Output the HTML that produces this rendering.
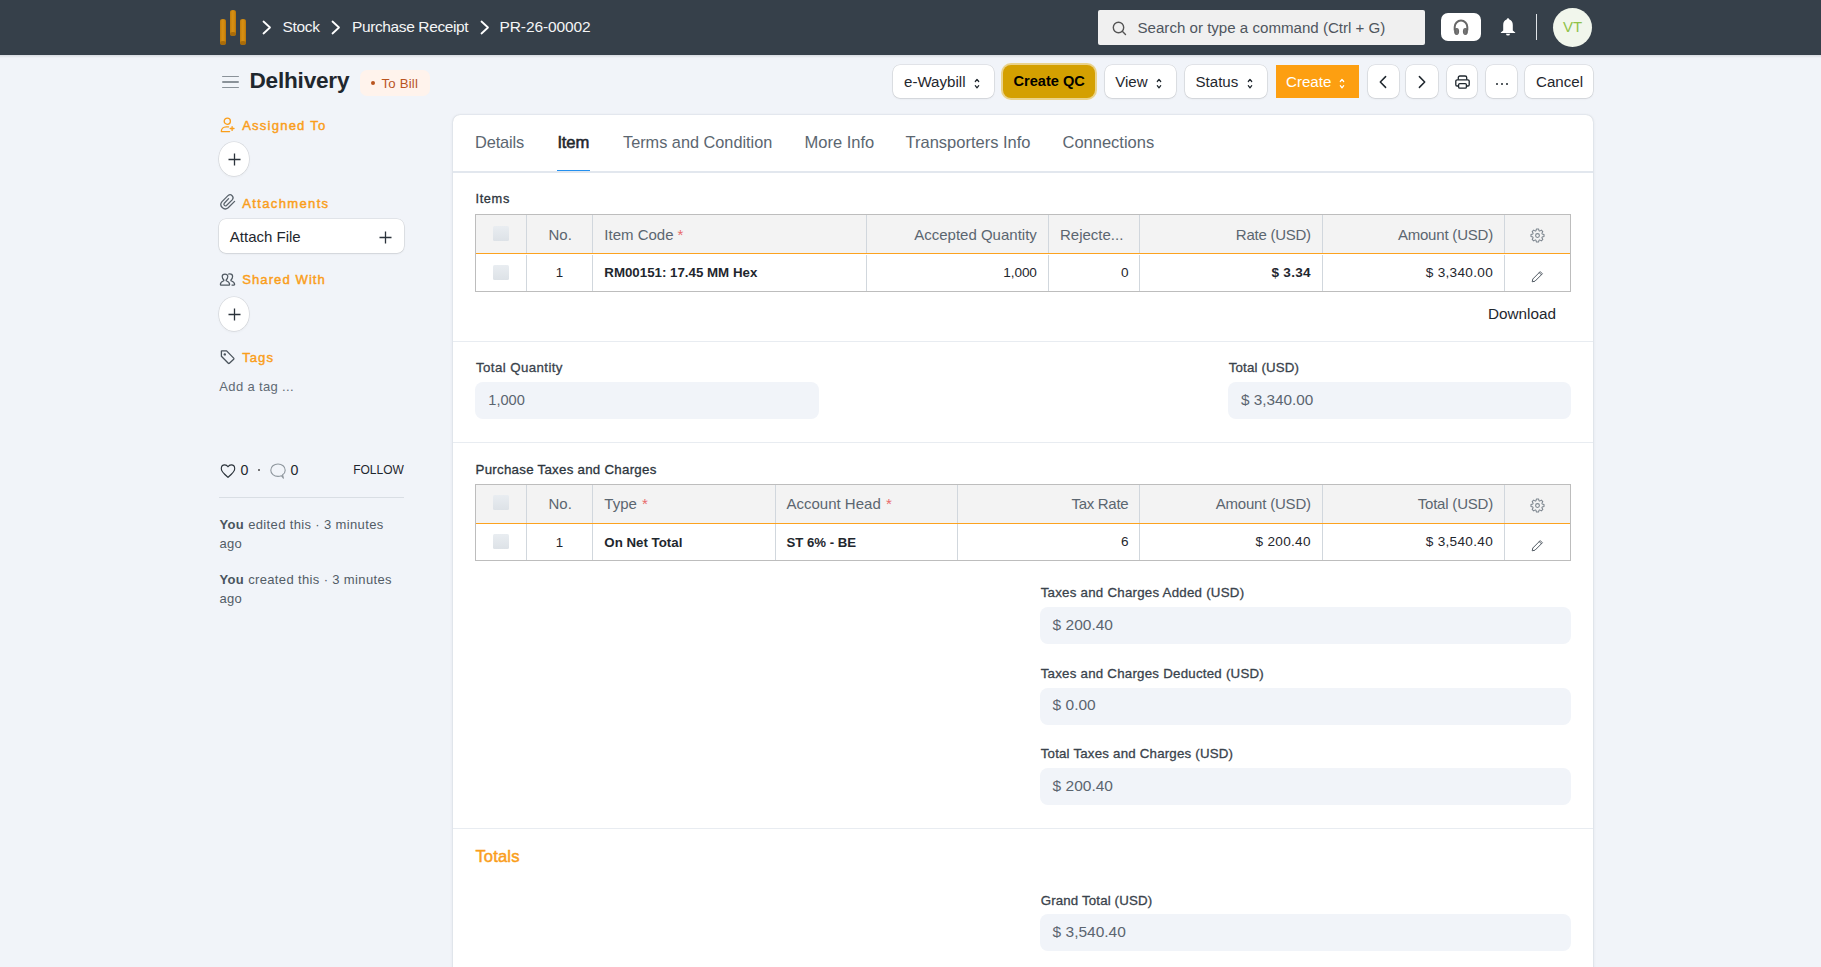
<!DOCTYPE html>
<html><head><meta charset="utf-8"><title>PR-26-00002</title>
<style>
html,body{margin:0;padding:0;}
body{width:1821px;height:967px;overflow:hidden;position:relative;background:#f1f4f9;font-family:"Liberation Sans",sans-serif;}
.r{position:absolute;display:block;}
.t{position:absolute;white-space:nowrap;}
</style></head><body>
<div class="r" style="left:0px;top:0px;width:1821px;height:55px;background:#36404a;"></div>
<div class="r" style="left:220.1px;top:19px;width:6.400000000000006px;height:26.200000000000003px;background:linear-gradient(90deg,#c07d0c 0%,#d78f12 40%,#d08a10 70%,#b87409 100%);border-radius:3.200000000000003px/2.400000000000002px;"></div>
<div class="r" style="left:220.4px;top:40.72px;width:5.799999999999983px;height:4.280000000000001px;background:#9c6208;border-radius:50%;opacity:.75;"></div>
<div class="r" style="left:230.1px;top:10px;width:6.400000000000006px;height:26.200000000000003px;background:linear-gradient(90deg,#c07d0c 0%,#d78f12 40%,#d08a10 70%,#b87409 100%);border-radius:3.200000000000003px/2.400000000000002px;"></div>
<div class="r" style="left:230.4px;top:31.72px;width:5.799999999999983px;height:4.280000000000001px;background:#9c6208;border-radius:50%;opacity:.75;"></div>
<div class="r" style="left:240.1px;top:19px;width:6.400000000000006px;height:26.200000000000003px;background:linear-gradient(90deg,#c07d0c 0%,#d78f12 40%,#d08a10 70%,#b87409 100%);border-radius:3.200000000000003px/2.400000000000002px;"></div>
<div class="r" style="left:240.4px;top:40.72px;width:5.799999999999983px;height:4.280000000000001px;background:#9c6208;border-radius:50%;opacity:.75;"></div>
<svg class="r" style="left:262px;top:20px;" width="10" height="15" viewBox="0 0 10 15"><polyline points="1.5,1.5 8,7.5 1.5,13.5" fill="none" stroke="#fff" stroke-width="1.8" stroke-linecap="round" stroke-linejoin="round"/></svg>
<svg class="r" style="left:331px;top:20px;" width="10" height="15" viewBox="0 0 10 15"><polyline points="1.5,1.5 8,7.5 1.5,13.5" fill="none" stroke="#fff" stroke-width="1.8" stroke-linecap="round" stroke-linejoin="round"/></svg>
<svg class="r" style="left:480px;top:20px;" width="10" height="15" viewBox="0 0 10 15"><polyline points="1.5,1.5 8,7.5 1.5,13.5" fill="none" stroke="#fff" stroke-width="1.8" stroke-linecap="round" stroke-linejoin="round"/></svg>
<div class="t " style="top:19.08px;font-size:15.5px;line-height:15.5px;font-weight:400;color:#f4f5f6;letter-spacing:-0.3px;left:282.50px;">Stock</div>
<div class="t " style="top:19.08px;font-size:15.5px;line-height:15.5px;font-weight:400;color:#f4f5f6;letter-spacing:-0.38px;left:352.00px;">Purchase Receipt</div>
<div class="t " style="top:19.08px;font-size:15.5px;line-height:15.5px;font-weight:400;color:#f4f5f6;letter-spacing:-0.1px;left:499.50px;">PR-26-00002</div>
<div class="r" style="left:1098px;top:10px;width:327px;height:35px;background:#f0f0f0;border-radius:2px;"></div>
<svg class="r" style="left:1112px;top:21px;" width="15" height="15" viewBox="0 0 15 15"><circle cx="6.5" cy="6.5" r="5.2" fill="none" stroke="#555" stroke-width="1.4"/><line x1="10.3" y1="10.3" x2="13.5" y2="13.5" stroke="#555" stroke-width="1.4" stroke-linecap="round"/></svg>
<div class="t " style="top:19.82px;font-size:15.1px;line-height:15.1px;font-weight:400;color:#4f565e;left:1137.50px;">Search or type a command (Ctrl + G)</div>
<div class="r" style="left:1441px;top:13px;width:40px;height:28px;background:#fff;border-radius:7px;"></div>
<svg class="r" style="left:1453px;top:19px;" width="16" height="17" viewBox="0 0 16 17"><path d="M1.7,11.5 V7.9 A6.3,6.3 0 0 1 14.3,7.9 V11.5" fill="none" stroke="#686868" stroke-width="2"/><ellipse cx="3.6" cy="12.5" rx="2.5" ry="3.4" fill="#686868"/><ellipse cx="12.4" cy="12.5" rx="2.5" ry="3.4" fill="#686868"/><rect x="3.2" y="9.6" width="1.6" height="5.8" fill="#888" opacity=".5"/><rect x="11.2" y="9.6" width="1.6" height="5.8" fill="#888" opacity=".5"/></svg>
<svg class="r" style="left:1500px;top:18px;" width="16" height="18" viewBox="0 0 16 18"><path d="M8,0.3 C8.8,0.3 9.2,1 9.3,1.6 C11.6,2.3 12.8,4.4 12.8,7 V12.4 L15.2,14.6 V15 H0.8 V14.6 L3.2,12.4 V7 C3.2,4.4 4.4,2.3 6.7,1.6 C6.8,1 7.2,0.3 8,0.3 Z" fill="#fff"/><path d="M6,15.7 H10 A2,1.9 0 0 1 6,15.7 Z" fill="#fff"/></svg>
<div class="r" style="left:1536px;top:14px;width:1.400000000000091px;height:26px;background:#dfe3e7;"></div>
<div class="r" style="left:1553px;top:8px;width:39px;height:39px;background:#f1f6ec;border-radius:50%;"></div>
<div class="t " style="top:19.20px;font-size:15px;line-height:15px;font-weight:400;color:#8fc249;left:1372.50px;width:400px;text-align:center;">VT</div>
<div class="r" style="left:0px;top:55px;width:1821px;height:912px;background:#f1f4f9;"></div>
<div class="r" style="left:0px;top:55px;width:1821px;height:3px;background:linear-gradient(180deg,rgba(40,50,60,.13),rgba(40,50,60,0));"></div>
<div class="r" style="left:221.5px;top:75.5px;width:17.0px;height:1.7999999999999972px;background:#8a9299;border-radius:1px;"></div>
<div class="r" style="left:221.5px;top:81px;width:17.0px;height:1.7999999999999972px;background:#8a9299;border-radius:1px;"></div>
<div class="r" style="left:221.5px;top:86.5px;width:17.0px;height:1.7999999999999972px;background:#8a9299;border-radius:1px;"></div>
<div class="t " style="top:69.87px;font-size:22.6px;line-height:22.6px;font-weight:700;color:#1f272e;letter-spacing:-0.22px;left:249.50px;">Delhivery</div>
<div class="r" style="left:360px;top:70px;width:70px;height:26px;background:#fff3ec;border-radius:7px;"></div>
<div class="r" style="left:371px;top:81px;width:4px;height:4px;background:#b9541f;border-radius:50%;"></div>
<div class="t " style="top:76.63px;font-size:13.2px;line-height:13.2px;font-weight:400;color:#b9541f;letter-spacing:0.2px;left:381.50px;">To Bill</div>
<div class="r" style="left:893px;top:64.5px;width:101px;height:33.8px;background:#fff;border-radius:7px;box-shadow:0 0 0 0.6px rgba(0,0,0,.13),0 1px 2px rgba(0,0,0,.08);"></div>
<div class="t " style="top:74.02px;font-size:15.1px;line-height:15.1px;font-weight:400;color:#1f272e;left:904.00px;">e-Waybill</div>
<svg class="r" style="left:973.5px;top:78.2px;" width="6" height="10.4" viewBox="0 0 6 10.4"><polyline points="1.3,3.5 3,1.4 4.7,3.5" fill="none" stroke="#1f272e" stroke-width="1.25" stroke-linecap="round" stroke-linejoin="round"/><polyline points="1.3,7.7 3,9.8 4.7,7.7" fill="none" stroke="#1f272e" stroke-width="1.25" stroke-linecap="round" stroke-linejoin="round"/></svg>
<div class="r" style="left:1002.6px;top:65.2px;width:92.80000000000007px;height:32.5px;background:#d4a001;border-radius:8px;box-shadow:0 0 0 2px #ead38c;"></div>
<div class="t " style="top:74.44px;font-size:14.6px;line-height:14.6px;font-weight:700;color:#000;left:1013.50px;">Create QC</div>
<div class="r" style="left:1104.7px;top:64.5px;width:71.70000000000005px;height:33.8px;background:#fff;border-radius:7px;box-shadow:0 0 0 0.6px rgba(0,0,0,.13),0 1px 2px rgba(0,0,0,.08);"></div>
<div class="t " style="top:74.02px;font-size:15.1px;line-height:15.1px;font-weight:400;color:#1f272e;left:1115.20px;">View</div>
<svg class="r" style="left:1156px;top:78.2px;" width="6" height="10.4" viewBox="0 0 6 10.4"><polyline points="1.3,3.5 3,1.4 4.7,3.5" fill="none" stroke="#1f272e" stroke-width="1.25" stroke-linecap="round" stroke-linejoin="round"/><polyline points="1.3,7.7 3,9.8 4.7,7.7" fill="none" stroke="#1f272e" stroke-width="1.25" stroke-linecap="round" stroke-linejoin="round"/></svg>
<div class="r" style="left:1184.8px;top:64.5px;width:82.20000000000005px;height:33.8px;background:#fff;border-radius:7px;box-shadow:0 0 0 0.6px rgba(0,0,0,.13),0 1px 2px rgba(0,0,0,.08);"></div>
<div class="t " style="top:74.02px;font-size:15.1px;line-height:15.1px;font-weight:400;color:#1f272e;left:1195.50px;">Status</div>
<svg class="r" style="left:1247px;top:78.2px;" width="6" height="10.4" viewBox="0 0 6 10.4"><polyline points="1.3,3.5 3,1.4 4.7,3.5" fill="none" stroke="#1f272e" stroke-width="1.25" stroke-linecap="round" stroke-linejoin="round"/><polyline points="1.3,7.7 3,9.8 4.7,7.7" fill="none" stroke="#1f272e" stroke-width="1.25" stroke-linecap="round" stroke-linejoin="round"/></svg>
<div class="r" style="left:1276px;top:65.2px;width:83px;height:32.599999999999994px;background:#fd9f11;"></div>
<div class="t " style="top:74.02px;font-size:15.1px;line-height:15.1px;font-weight:400;color:#fff;left:1286.00px;">Create</div>
<svg class="r" style="left:1338.5px;top:78.2px;" width="6" height="10.4" viewBox="0 0 6 10.4"><polyline points="1.3,3.5 3,1.4 4.7,3.5" fill="none" stroke="#fff" stroke-width="1.25" stroke-linecap="round" stroke-linejoin="round"/><polyline points="1.3,7.7 3,9.8 4.7,7.7" fill="none" stroke="#fff" stroke-width="1.25" stroke-linecap="round" stroke-linejoin="round"/></svg>
<div class="r" style="left:1367.5px;top:64.5px;width:31.5px;height:33.8px;background:#fff;border-radius:7px;box-shadow:0 0 0 0.6px rgba(0,0,0,.13),0 1px 2px rgba(0,0,0,.08);"></div>
<svg class="r" style="left:1379px;top:75px;" width="8" height="14" viewBox="0 0 8 14"><polyline points="6.6,1.6 1.3,7 6.6,12.4" fill="none" stroke="#1f272e" stroke-width="1.5" stroke-linecap="round" stroke-linejoin="round"/></svg>
<div class="r" style="left:1406.4px;top:64.5px;width:31.59999999999991px;height:33.8px;background:#fff;border-radius:7px;box-shadow:0 0 0 0.6px rgba(0,0,0,.13),0 1px 2px rgba(0,0,0,.08);"></div>
<svg class="r" style="left:1418px;top:75px;" width="8" height="14" viewBox="0 0 8 14"><polyline points="1.4,1.6 6.7,7 1.4,12.4" fill="none" stroke="#1f272e" stroke-width="1.5" stroke-linecap="round" stroke-linejoin="round"/></svg>
<div class="r" style="left:1446.6px;top:64.5px;width:30.40000000000009px;height:33.8px;background:#fff;border-radius:7px;box-shadow:0 0 0 0.6px rgba(0,0,0,.13),0 1px 2px rgba(0,0,0,.08);"></div>
<svg class="r" style="left:1454.5px;top:74.5px;" width="15" height="14" viewBox="0 0 15 14"><path d="M3.3,4.8 V2.6 A1.6,1.6 0 0 1 4.9,1 H10.1 A1.6,1.6 0 0 1 11.7,2.6 V4.8" fill="none" stroke="#1f272e" stroke-width="1.3"/><path d="M3.3,11 H2.1 A1.3,1.3 0 0 1 0.8,9.7 V6.1 A1.3,1.3 0 0 1 2.1,4.8 H12.9 A1.3,1.3 0 0 1 14.2,6.1 V9.7 A1.3,1.3 0 0 1 12.9,11 H11.7" fill="none" stroke="#1f272e" stroke-width="1.3"/><rect x="3.6" y="8.6" width="7.8" height="4.6" rx="1.2" fill="none" stroke="#1f272e" stroke-width="1.3"/></svg>
<div class="r" style="left:1485.5px;top:64.5px;width:31.5px;height:33.8px;background:#fff;border-radius:7px;box-shadow:0 0 0 0.6px rgba(0,0,0,.13),0 1px 2px rgba(0,0,0,.08);"></div>
<div class="r" style="left:1496px;top:83px;width:2.400000000000091px;height:2.4000000000000057px;background:#1f272e;border-radius:50%;"></div>
<div class="r" style="left:1501px;top:83px;width:2.400000000000091px;height:2.4000000000000057px;background:#1f272e;border-radius:50%;"></div>
<div class="r" style="left:1506px;top:83px;width:2.400000000000091px;height:2.4000000000000057px;background:#1f272e;border-radius:50%;"></div>
<div class="r" style="left:1524.5px;top:64.5px;width:68.5px;height:33.8px;background:#fff;border-radius:7px;box-shadow:0 0 0 0.6px rgba(0,0,0,.13),0 1px 2px rgba(0,0,0,.08);"></div>
<div class="t " style="top:74.02px;font-size:15.1px;line-height:15.1px;font-weight:400;color:#1f272e;left:1536.00px;">Cancel</div>
<svg class="r" style="left:220px;top:117px;" width="16" height="16" viewBox="0 0 16 16"><circle cx="7.3" cy="4.2" r="3.1" fill="none" stroke="#fa9e1b" stroke-width="1.3"/><path d="M8.5,9.9 H6.2 C3.3,9.9 1.3,12 1.3,14.6 H9.6" fill="none" stroke="#fa9e1b" stroke-width="1.3" stroke-linecap="round" stroke-linejoin="round"/><path d="M12.1,9.6 V13.4 M10.2,11.5 H14" stroke="#fa9e1b" stroke-width="1.3" stroke-linecap="round"/></svg>
<div class="t " style="top:118.71px;font-size:13.1px;line-height:13.1px;font-weight:400;color:#fa9e1b;letter-spacing:1.19px;left:242.20px;-webkit-text-stroke:0.45px #fa9e1b;">Assigned To</div>
<div class="r" style="left:218.7px;top:142.2px;width:30.700000000000017px;height:34.0px;background:#fff;border-radius:50%;box-shadow:0 0 0 0.6px rgba(0,0,0,.12),0 1px 3px rgba(0,0,0,.06);"></div>
<svg class="r" style="left:227.5px;top:153.2px;" width="13" height="13" viewBox="0 0 13 13"><path d="M6.5,0.5 V12.5 M0.5,6.5 H12.5" stroke="#2b333b" stroke-width="1.3"/></svg>
<svg class="r" style="left:215px;top:190px;" width="25" height="22" viewBox="0 0 25 22"><path d="M19.6,11.4 L13.2,17.8 A4.4,4.4 0 0 1 7,11.6 L13.2,5.4 A3,3 0 0 1 17.4,9.6 L11.5,15.5 A1.6,1.6 0 0 1 9.3,13.2 L13.6,8.6" fill="none" stroke="#5a636c" stroke-width="1.3" stroke-linecap="round"/></svg>
<div class="t " style="top:196.61px;font-size:13.1px;line-height:13.1px;font-weight:400;color:#fa9e1b;letter-spacing:1.32px;left:242.20px;-webkit-text-stroke:0.45px #fa9e1b;">Attachments</div>
<div class="r" style="left:219px;top:219.3px;width:185px;height:34.0px;background:#fff;border-radius:7px;box-shadow:0 0 0 0.6px rgba(0,0,0,.12),0 1px 2px rgba(0,0,0,.08);"></div>
<div class="t " style="top:229.30px;font-size:15px;line-height:15px;font-weight:400;color:#1f272e;left:229.80px;">Attach File</div>
<svg class="r" style="left:378.5px;top:230.5px;" width="13" height="13" viewBox="0 0 13 13"><path d="M6.5,0.5 V12.5 M0.5,6.5 H12.5" stroke="#2b333b" stroke-width="1.3"/></svg>
<svg class="r" style="left:215px;top:268px;" width="25" height="24" viewBox="0 0 25 24"><path d="M6,17.1 H14 A0.6,0.6 0 0 0 14.6,16.5 C14.6,14.6 13.4,13.7 11.8,13 L11.1,12.6 V11.9 C12.1,11.1 12.8,9.9 12.8,8.6 C12.8,6.9 11.6,6 10,6 C8.4,6 7.2,6.9 7.2,8.6 C7.2,9.9 7.9,11.1 8.9,11.9 V12.6 L8.2,13 C6.6,13.7 5.4,14.6 5.4,16.5 A0.6,0.6 0 0 0 6,17.1 Z" fill="none" stroke="#505962" stroke-width="1.25" stroke-linejoin="round"/><path d="M13.6,6 C14,5.95 14.4,5.9 14.8,5.9 C16.4,5.9 17.6,6.8 17.6,8.6 C17.6,9.9 16.9,11.1 15.9,11.9 V12.6 L16.6,13 C18.2,13.7 19.6,14.6 19.6,16.5 A0.6,0.6 0 0 1 19,17.1 H17" fill="none" stroke="#505962" stroke-width="1.25" stroke-linejoin="round" stroke-linecap="round"/></svg>
<div class="t " style="top:273.21px;font-size:13.1px;line-height:13.1px;font-weight:400;color:#fa9e1b;letter-spacing:1.06px;left:242.20px;-webkit-text-stroke:0.45px #fa9e1b;">Shared With</div>
<div class="r" style="left:218.7px;top:297.4px;width:30.700000000000017px;height:34.0px;background:#fff;border-radius:50%;box-shadow:0 0 0 0.6px rgba(0,0,0,.12),0 1px 3px rgba(0,0,0,.06);"></div>
<svg class="r" style="left:227.5px;top:308.4px;" width="13" height="13" viewBox="0 0 13 13"><path d="M6.5,0.5 V12.5 M0.5,6.5 H12.5" stroke="#2b333b" stroke-width="1.3"/></svg>
<svg class="r" style="left:220px;top:349.5px;" width="16" height="16" viewBox="0 0 16 16"><path d="M1.4,1.2 A0.3,0.3 0 0 1 1.7,0.9 H6.6 L13.7,8.1 A0.8,0.8 0 0 1 13.7,9.2 L9.4,13.2 A0.8,0.8 0 0 1 8.3,13.2 L1.4,6.2 Z" fill="none" stroke="#4a535c" stroke-width="1.3" stroke-linejoin="round"/><circle cx="4.8" cy="4.4" r="1.2" fill="#4a535c"/></svg>
<div class="t " style="top:351.01px;font-size:13.1px;line-height:13.1px;font-weight:400;color:#fa9e1b;letter-spacing:1.033px;left:242.20px;-webkit-text-stroke:0.45px #fa9e1b;">Tags</div>
<div class="t " style="top:379.70px;font-size:13px;line-height:13px;font-weight:400;color:#606a74;letter-spacing:0.35px;left:219.30px;">Add a tag ...</div>
<svg class="r" style="left:219.5px;top:463.5px;" width="16" height="15" viewBox="0 0 16 15"><path d="M8,13.3 C5.5,11.1 1.3,7.9 1.3,4.7 C1.3,2.5 2.9,0.9 4.8,0.9 C6.2,0.9 7.3,1.7 8,2.8 C8.7,1.7 9.8,0.9 11.2,0.9 C13.1,0.9 14.7,2.5 14.7,4.7 C14.7,7.9 10.5,11.1 8,13.3 Z" fill="none" stroke="#2b333b" stroke-width="1.15" stroke-linejoin="round"/></svg>
<div class="t " style="top:462.68px;font-size:14.2px;line-height:14.2px;font-weight:400;color:#1f272e;left:240.50px;">0</div>
<div class="r" style="left:257.6px;top:468.9px;width:2.1999999999999886px;height:2.2000000000000455px;background:#4a4a4a;border-radius:50%;"></div>
<svg class="r" style="left:269.5px;top:462.5px;" width="17" height="17" viewBox="0 0 17 17"><path d="M12.6,11.8 C14.3,10.6 15.2,9 15.2,7.2 C15.2,3.7 12,1 8,1 C4,1 0.8,3.7 0.8,7.2 C0.8,10.7 4,13.4 8,13.4 C9.3,13.4 10.4,13.1 11.4,12.7 L13.4,15.2 Z" fill="none" stroke="#8f979e" stroke-width="1.1" stroke-linejoin="round"/></svg>
<div class="t " style="top:462.68px;font-size:14.2px;line-height:14.2px;font-weight:400;color:#1f272e;left:290.50px;">0</div>
<div class="t " style="top:463.74px;font-size:12px;line-height:12px;font-weight:400;color:#1f272e;right:1417.20px;">FOLLOW</div>
<div class="r" style="left:219px;top:497px;width:185px;height:1px;background:#d9dee4;"></div>
<div class="t " style="top:517.90px;font-size:13px;line-height:13px;font-weight:400;color:#525c66;letter-spacing:0.36px;left:219.50px;"><b style="color:#4a545e">You</b> edited this · 3 minutes</div>
<div class="t " style="top:536.80px;font-size:13px;line-height:13px;font-weight:400;color:#525c66;letter-spacing:0.3px;left:219.50px;">ago</div>
<div class="t " style="top:572.70px;font-size:13px;line-height:13px;font-weight:400;color:#525c66;letter-spacing:0.36px;left:219.50px;"><b style="color:#4a545e">You</b> created this · 3 minutes</div>
<div class="t " style="top:592.20px;font-size:13px;line-height:13px;font-weight:400;color:#525c66;letter-spacing:0.3px;left:219.50px;">ago</div>
<div class="r" style="left:452.7px;top:114.5px;width:1140.3px;height:885.5px;background:#fff;border-radius:7px;box-shadow:0 0 1.5px rgba(25,39,52,.22),0 1px 4px rgba(25,39,52,.07);"></div>
<div class="t " style="top:134.12px;font-size:16.4px;line-height:16.4px;font-weight:400;color:#5b6670;letter-spacing:-0.15px;left:475.00px;">Details</div>
<div class="t " style="top:135.05px;font-size:16.6px;line-height:16.6px;font-weight:400;color:#1f272e;letter-spacing:-0.133px;left:557.40px;-webkit-text-stroke:0.55px #1f272e;">Item</div>
<div class="t " style="top:134.20px;font-size:16.3px;line-height:16.3px;font-weight:400;color:#5b6670;left:623.00px;">Terms and Condition</div>
<div class="t " style="top:134.03px;font-size:16.5px;line-height:16.5px;font-weight:400;color:#5b6670;left:804.50px;">More Info</div>
<div class="t " style="top:134.03px;font-size:16.5px;line-height:16.5px;font-weight:400;color:#5b6670;left:905.50px;">Transporters Info</div>
<div class="t " style="top:134.03px;font-size:16.5px;line-height:16.5px;font-weight:400;color:#5b6670;left:1062.50px;">Connections</div>
<div class="r" style="left:453px;top:171.3px;width:1140px;height:1.6999999999999886px;background:#e2e7ee;"></div>
<div class="r" style="left:557px;top:169.7px;width:33px;height:1.700000000000017px;background:#2490ef;"></div>
<div class="t " style="top:193.16px;font-size:12.8px;line-height:12.8px;font-weight:400;color:#2d353d;letter-spacing:0.625px;left:475.50px;-webkit-text-stroke:0.3px #2d353d;">Items</div>
<div class="r" style="left:475.3px;top:214.2px;width:1095.7px;height:77.40000000000003px;background:#fff;box-shadow:inset 0 0 0 1px #bdbdbd;"></div>
<div class="r" style="left:476.3px;top:215.2px;width:1093.7px;height:38.0px;background:#f3f3f3;"></div>
<div class="r" style="left:476.3px;top:253.2px;width:1093.7px;height:1.3000000000000114px;background:#fca21f;"></div>
<div class="r" style="left:526.1px;top:215.2px;width:1.0px;height:38.0px;background:#d1d7dd;"></div>
<div class="r" style="left:526.1px;top:254.5px;width:1.0px;height:36.10000000000002px;background:#d1d7dd;"></div>
<div class="r" style="left:591.8px;top:215.2px;width:1.0px;height:38.0px;background:#d1d7dd;"></div>
<div class="r" style="left:591.8px;top:254.5px;width:1.0px;height:36.10000000000002px;background:#d1d7dd;"></div>
<div class="r" style="left:865.8px;top:215.2px;width:1.0px;height:38.0px;background:#d1d7dd;"></div>
<div class="r" style="left:865.8px;top:254.5px;width:1.0px;height:36.10000000000002px;background:#d1d7dd;"></div>
<div class="r" style="left:1047.9px;top:215.2px;width:1.0px;height:38.0px;background:#d1d7dd;"></div>
<div class="r" style="left:1047.9px;top:254.5px;width:1.0px;height:36.10000000000002px;background:#d1d7dd;"></div>
<div class="r" style="left:1138.9px;top:215.2px;width:1.0px;height:38.0px;background:#d1d7dd;"></div>
<div class="r" style="left:1138.9px;top:254.5px;width:1.0px;height:36.10000000000002px;background:#d1d7dd;"></div>
<div class="r" style="left:1321.7px;top:215.2px;width:1.0px;height:38.0px;background:#d1d7dd;"></div>
<div class="r" style="left:1321.7px;top:254.5px;width:1.0px;height:36.10000000000002px;background:#d1d7dd;"></div>
<div class="r" style="left:1503.9px;top:215.2px;width:1.0px;height:38.0px;background:#d1d7dd;"></div>
<div class="r" style="left:1503.9px;top:254.5px;width:1.0px;height:36.10000000000002px;background:#d1d7dd;"></div>
<div class="r" style="left:493px;top:226px;width:16px;height:15px;background:linear-gradient(180deg,#e9edf1,#dde2e7);border-radius:1.5px;"></div>
<div class="r" style="left:493px;top:265px;width:16px;height:15px;background:linear-gradient(180deg,#e9edf1,#dde2e7);border-radius:1.5px;"></div>
<div class="t " style="top:227.00px;font-size:15px;line-height:15px;font-weight:400;color:#5b6670;left:548.50px;">No.</div>
<div class="t " style="top:227.00px;font-size:15px;line-height:15px;font-weight:400;color:#5b6670;left:604.30px;">Item Code</div>
<div class="t " style="top:226.80px;font-size:15px;line-height:15px;font-weight:400;color:#e86a6a;left:677.50px;">*</div>
<div class="t " style="top:227.00px;font-size:15px;line-height:15px;font-weight:400;color:#5b6670;right:784.20px;">Accepted Quantity</div>
<div class="t " style="top:227.00px;font-size:15px;line-height:15px;font-weight:400;color:#5b6670;left:1060.00px;">Rejecte...</div>
<div class="t " style="top:227.00px;font-size:15px;line-height:15px;font-weight:400;color:#5b6670;letter-spacing:-0.25px;right:510.20px;">Rate (USD)</div>
<div class="t " style="top:227.00px;font-size:15px;line-height:15px;font-weight:400;color:#5b6670;letter-spacing:-0.2px;right:328.00px;">Amount (USD)</div>
<svg class="r" style="left:1530.3px;top:228.3px;" width="15" height="15" viewBox="0 0 15 15"><path d="M12.13,5.90 L14.02,6.47 L14.02,8.53 L12.13,9.10 L11.90,9.65 L12.84,11.38 L11.38,12.84 L9.65,11.90 L9.10,12.13 L8.53,14.02 L6.47,14.02 L5.90,12.13 L5.35,11.90 L3.62,12.84 L2.16,11.38 L3.10,9.65 L2.87,9.10 L0.98,8.53 L0.98,6.47 L2.87,5.90 L3.10,5.35 L2.16,3.62 L3.62,2.16 L5.35,3.10 L5.90,2.87 L6.47,0.98 L8.53,0.98 L9.10,2.87 L9.65,3.10 L11.38,2.16 L12.84,3.62 L11.90,5.35 Z" fill="none" stroke="#7c858e" stroke-width="1.05" stroke-linejoin="round"/><circle cx="7.5" cy="7.5" r="1.9" fill="none" stroke="#7c858e" stroke-width="1.05"/></svg>
<div class="t " style="top:266.24px;font-size:13.3px;line-height:13.3px;font-weight:400;color:#1f272e;left:359.50px;width:400px;text-align:center;">1</div>
<div class="t " style="top:266.24px;font-size:13.3px;line-height:13.3px;font-weight:700;color:#1f272e;left:604.30px;">RM00151: 17.45 MM Hex</div>
<div class="t " style="top:265.99px;font-size:13.6px;line-height:13.6px;font-weight:400;color:#1f272e;letter-spacing:-0.1px;right:784.20px;">1,000</div>
<div class="t " style="top:265.99px;font-size:13.6px;line-height:13.6px;font-weight:400;color:#1f272e;right:692.50px;">0</div>
<div class="t " style="top:265.99px;font-size:13.6px;line-height:13.6px;font-weight:700;color:#1f272e;letter-spacing:0.25px;right:510.20px;">$ 3.34</div>
<div class="t " style="top:265.99px;font-size:13.6px;line-height:13.6px;font-weight:400;color:#1f272e;letter-spacing:0.3px;right:328.00px;">$ 3,340.00</div>
<svg class="r" style="left:1531px;top:269.5px;" width="13" height="13" viewBox="0 0 13 13"><path d="M1.2,11.8 L1.8,9 L9.2,1.6 L11.4,3.8 L4,11.2 Z M8.2,2.6 L10.4,4.8" fill="none" stroke="#525b64" stroke-width="1" stroke-linejoin="round"/></svg>
<div class="t " style="top:306.05px;font-size:15.3px;line-height:15.3px;font-weight:400;color:#1f272e;right:265.00px;">Download</div>
<div class="r" style="left:453px;top:340.6px;width:1140px;height:1.1999999999999886px;background:#e8ecf1;"></div>
<div class="t " style="top:361.24px;font-size:13.3px;line-height:13.3px;font-weight:400;color:#3a434c;letter-spacing:0.4px;left:476.00px;-webkit-text-stroke:0.3px #3a434c;">Total Quantity</div>
<div class="r" style="left:475px;top:382px;width:344px;height:36.60000000000002px;background:#f1f4f9;border-radius:8px;"></div>
<div class="t " style="top:392.64px;font-size:14.6px;line-height:14.6px;font-weight:400;color:#5b6570;left:488.30px;">1,000</div>
<div class="t " style="top:361.24px;font-size:13.3px;line-height:13.3px;font-weight:400;color:#3a434c;letter-spacing:0.16px;left:1228.70px;-webkit-text-stroke:0.3px #3a434c;">Total (USD)</div>
<div class="r" style="left:1228px;top:382px;width:343px;height:36.60000000000002px;background:#f1f4f9;border-radius:8px;"></div>
<div class="t " style="top:391.55px;font-size:15.3px;line-height:15.3px;font-weight:400;color:#5b6570;left:1241.00px;">$ 3,340.00</div>
<div class="r" style="left:453px;top:442px;width:1140px;height:1.1999999999999886px;background:#e8ecf1;"></div>
<div class="t " style="top:462.64px;font-size:13.3px;line-height:13.3px;font-weight:400;color:#2d353d;letter-spacing:0.264px;left:475.50px;-webkit-text-stroke:0.3px #2d353d;">Purchase Taxes and Charges</div>
<div class="r" style="left:475.3px;top:483.5px;width:1095.7px;height:77.10000000000002px;background:#fff;box-shadow:inset 0 0 0 1px #bdbdbd;"></div>
<div class="r" style="left:476.3px;top:484.5px;width:1093.7px;height:38.0px;background:#f3f3f3;"></div>
<div class="r" style="left:476.3px;top:522.5px;width:1093.7px;height:1.2999999999999545px;background:#fca21f;"></div>
<div class="r" style="left:525.8px;top:484.5px;width:1.0px;height:38.0px;background:#d1d7dd;"></div>
<div class="r" style="left:525.8px;top:523.8px;width:1.0px;height:35.80000000000007px;background:#d1d7dd;"></div>
<div class="r" style="left:591.8px;top:484.5px;width:1.0px;height:38.0px;background:#d1d7dd;"></div>
<div class="r" style="left:591.8px;top:523.8px;width:1.0px;height:35.80000000000007px;background:#d1d7dd;"></div>
<div class="r" style="left:774.8px;top:484.5px;width:1.0px;height:38.0px;background:#d1d7dd;"></div>
<div class="r" style="left:774.8px;top:523.8px;width:1.0px;height:35.80000000000007px;background:#d1d7dd;"></div>
<div class="r" style="left:956.8px;top:484.5px;width:1.0px;height:38.0px;background:#d1d7dd;"></div>
<div class="r" style="left:956.8px;top:523.8px;width:1.0px;height:35.80000000000007px;background:#d1d7dd;"></div>
<div class="r" style="left:1138.8px;top:484.5px;width:1.0px;height:38.0px;background:#d1d7dd;"></div>
<div class="r" style="left:1138.8px;top:523.8px;width:1.0px;height:35.80000000000007px;background:#d1d7dd;"></div>
<div class="r" style="left:1321.7px;top:484.5px;width:1.0px;height:38.0px;background:#d1d7dd;"></div>
<div class="r" style="left:1321.7px;top:523.8px;width:1.0px;height:35.80000000000007px;background:#d1d7dd;"></div>
<div class="r" style="left:1503.9px;top:484.5px;width:1.0px;height:38.0px;background:#d1d7dd;"></div>
<div class="r" style="left:1503.9px;top:523.8px;width:1.0px;height:35.80000000000007px;background:#d1d7dd;"></div>
<div class="r" style="left:493px;top:495px;width:16px;height:15px;background:linear-gradient(180deg,#e9edf1,#dde2e7);border-radius:1.5px;"></div>
<div class="r" style="left:493px;top:534px;width:16px;height:15px;background:linear-gradient(180deg,#e9edf1,#dde2e7);border-radius:1.5px;"></div>
<div class="t " style="top:496.30px;font-size:15px;line-height:15px;font-weight:400;color:#5b6670;left:548.50px;">No.</div>
<div class="t " style="top:496.30px;font-size:15px;line-height:15px;font-weight:400;color:#5b6670;left:604.30px;">Type</div>
<div class="t " style="top:496.10px;font-size:15px;line-height:15px;font-weight:400;color:#e86a6a;left:642.00px;">*</div>
<div class="t " style="top:496.30px;font-size:15px;line-height:15px;font-weight:400;color:#5b6670;left:786.50px;">Account Head</div>
<div class="t " style="top:496.10px;font-size:15px;line-height:15px;font-weight:400;color:#e86a6a;left:886.00px;">*</div>
<div class="t " style="top:496.30px;font-size:15px;line-height:15px;font-weight:400;color:#5b6670;letter-spacing:-0.3px;right:692.70px;">Tax Rate</div>
<div class="t " style="top:496.30px;font-size:15px;line-height:15px;font-weight:400;color:#5b6670;letter-spacing:-0.2px;right:510.20px;">Amount (USD)</div>
<div class="t " style="top:496.30px;font-size:15px;line-height:15px;font-weight:400;color:#5b6670;letter-spacing:-0.2px;right:328.00px;">Total (USD)</div>
<svg class="r" style="left:1530.3px;top:497.5px;" width="15" height="15" viewBox="0 0 15 15"><path d="M12.13,5.90 L14.02,6.47 L14.02,8.53 L12.13,9.10 L11.90,9.65 L12.84,11.38 L11.38,12.84 L9.65,11.90 L9.10,12.13 L8.53,14.02 L6.47,14.02 L5.90,12.13 L5.35,11.90 L3.62,12.84 L2.16,11.38 L3.10,9.65 L2.87,9.10 L0.98,8.53 L0.98,6.47 L2.87,5.90 L3.10,5.35 L2.16,3.62 L3.62,2.16 L5.35,3.10 L5.90,2.87 L6.47,0.98 L8.53,0.98 L9.10,2.87 L9.65,3.10 L11.38,2.16 L12.84,3.62 L11.90,5.35 Z" fill="none" stroke="#7c858e" stroke-width="1.05" stroke-linejoin="round"/><circle cx="7.5" cy="7.5" r="1.9" fill="none" stroke="#7c858e" stroke-width="1.05"/></svg>
<div class="t " style="top:535.54px;font-size:13.3px;line-height:13.3px;font-weight:400;color:#1f272e;left:359.50px;width:400px;text-align:center;">1</div>
<div class="t " style="top:535.54px;font-size:13.3px;line-height:13.3px;font-weight:700;color:#1f272e;left:604.30px;">On Net Total</div>
<div class="t " style="top:535.63px;font-size:13.2px;line-height:13.2px;font-weight:700;color:#1f272e;left:786.50px;">ST 6% - BE</div>
<div class="t " style="top:535.29px;font-size:13.6px;line-height:13.6px;font-weight:400;color:#1f272e;right:692.50px;">6</div>
<div class="t " style="top:535.29px;font-size:13.6px;line-height:13.6px;font-weight:400;color:#1f272e;letter-spacing:0.3px;right:510.20px;">$ 200.40</div>
<div class="t " style="top:535.29px;font-size:13.6px;line-height:13.6px;font-weight:400;color:#1f272e;letter-spacing:0.3px;right:328.00px;">$ 3,540.40</div>
<svg class="r" style="left:1531px;top:538.5px;" width="13" height="13" viewBox="0 0 13 13"><path d="M1.2,11.8 L1.8,9 L9.2,1.6 L11.4,3.8 L4,11.2 Z M8.2,2.6 L10.4,4.8" fill="none" stroke="#525b64" stroke-width="1" stroke-linejoin="round"/></svg>
<div class="t " style="top:586.14px;font-size:13.3px;line-height:13.3px;font-weight:400;color:#3a434c;letter-spacing:0.243px;left:1040.70px;-webkit-text-stroke:0.3px #3a434c;">Taxes and Charges Added (USD)</div>
<div class="r" style="left:1040.2px;top:607.2px;width:530.8px;height:36.60000000000002px;background:#f1f4f9;border-radius:8px;"></div>
<div class="t " style="top:616.68px;font-size:15.5px;line-height:15.5px;font-weight:400;color:#5b6570;left:1052.60px;">$ 200.40</div>
<div class="t " style="top:667.24px;font-size:13.3px;line-height:13.3px;font-weight:400;color:#3a434c;letter-spacing:0.235px;left:1040.70px;-webkit-text-stroke:0.3px #3a434c;">Taxes and Charges Deducted (USD)</div>
<div class="r" style="left:1040.2px;top:688px;width:530.8px;height:36.60000000000002px;background:#f1f4f9;border-radius:8px;"></div>
<div class="t " style="top:697.48px;font-size:15.5px;line-height:15.5px;font-weight:400;color:#5b6570;left:1052.60px;">$ 0.00</div>
<div class="t " style="top:747.24px;font-size:13.3px;line-height:13.3px;font-weight:400;color:#3a434c;letter-spacing:0.2px;left:1040.70px;-webkit-text-stroke:0.3px #3a434c;">Total Taxes and Charges (USD)</div>
<div class="r" style="left:1040.2px;top:768.2px;width:530.8px;height:36.60000000000002px;background:#f1f4f9;border-radius:8px;"></div>
<div class="t " style="top:777.68px;font-size:15.5px;line-height:15.5px;font-weight:400;color:#5b6570;left:1052.60px;">$ 200.40</div>
<div class="r" style="left:453px;top:827.8px;width:1140px;height:1.2000000000000455px;background:#e8ecf1;"></div>
<div class="t " style="top:849.05px;font-size:16.6px;line-height:16.6px;font-weight:400;color:#fa9e1b;letter-spacing:0.14px;left:475.40px;-webkit-text-stroke:0.5px #fa9e1b;">Totals</div>
<div class="t " style="top:893.54px;font-size:13.3px;line-height:13.3px;font-weight:400;color:#3a434c;letter-spacing:0.144px;left:1040.70px;-webkit-text-stroke:0.3px #3a434c;">Grand Total (USD)</div>
<div class="r" style="left:1040.2px;top:914.2px;width:530.8px;height:36.60000000000002px;background:#f1f4f9;border-radius:8px;"></div>
<div class="t " style="top:923.68px;font-size:15.5px;line-height:15.5px;font-weight:400;color:#5b6570;left:1052.60px;">$ 3,540.40</div>
</body></html>
